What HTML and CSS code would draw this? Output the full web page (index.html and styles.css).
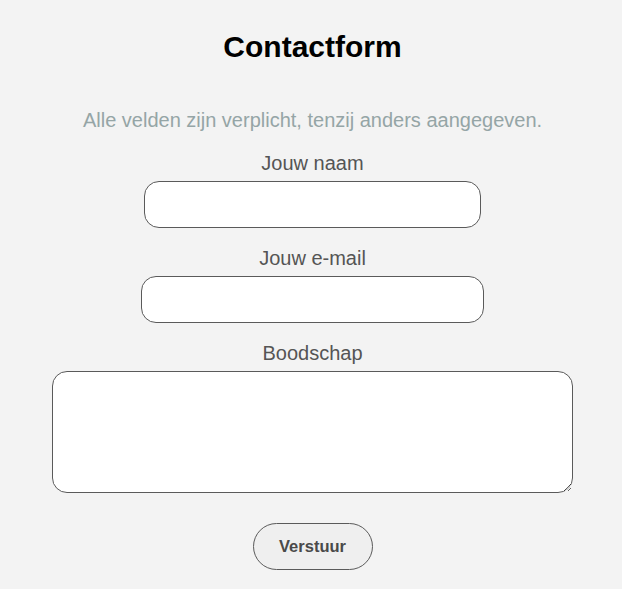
FILE: index.html
```html
<!DOCTYPE html>
<html lang="nl">
<head>
<meta charset="utf-8">
<title>Contactform</title>
<link rel="stylesheet" href="styles.css">
</head>
<body>
<main class="page">
  <h1 class="title">Contactform</h1>
  <p class="intro">Alle velden zijn verplicht, tenzij anders aangegeven.</p>
  <form class="form">
    <div class="field">
      <label class="label" for="naam">Jouw naam</label>
      <input class="input input-name" id="naam" type="text">
    </div>
    <div class="field">
      <label class="label" for="mail">Jouw e-mail</label>
      <input class="input input-mail" id="mail" type="email">
    </div>
    <div class="field">
      <label class="label" for="msg">Boodschap</label>
      <textarea class="input textarea" id="msg"></textarea>
    </div>
    <button class="submit" type="submit">Verstuur</button>
  </form>
</main>
</body>
</html>
```
FILE: styles.css
```css
html, body {
  margin: 0;
  background: #f3f3f3;
}
body {
  font-family: "Liberation Sans", Arial, sans-serif;
}
.page {
  display: flex;
  flex-direction: column;
  align-items: center;
  padding: 30px 0 0 3px;
}
.title {
  margin: 0 0 45px;
  font-size: 30px;
  font-weight: bold;
  color: #000;
  line-height: normal;
}
.intro {
  margin: 0 0 20px;
  font-size: 20px;
  color: #95a5a6;
  line-height: normal;
}
.form {
  display: flex;
  flex-direction: column;
  align-items: center;
  gap: 19px;
}
.field {
  display: flex;
  flex-direction: column;
  align-items: center;
  gap: 6px;
}
.label {
  font-size: 20px;
  color: #555;
  line-height: normal;
}
.input {
  box-sizing: border-box;
  margin: 0;
  height: 47px;
  border: 1px solid #5a5a5a;
  border-radius: 15px;
  background: #fff;
  font-family: inherit;
  font-size: 16px;
  padding: 0 12px;
}
.input-name {
  width: 337px;
}
.input-mail {
  width: 343px;
}
.textarea {
  width: 521px;
  height: 122px;
  padding: 8px 12px;
  display: block;
}
.submit {
  box-sizing: border-box;
  margin-top: 11px;
  width: 120px;
  height: 47px;
  border: 1px solid #5a5a5a;
  border-radius: 24px;
  background: #efefef;
  font-family: inherit;
  font-size: 16.5px;
  font-weight: bold;
  color: #4a4a4a;
  cursor: pointer;
}
```
